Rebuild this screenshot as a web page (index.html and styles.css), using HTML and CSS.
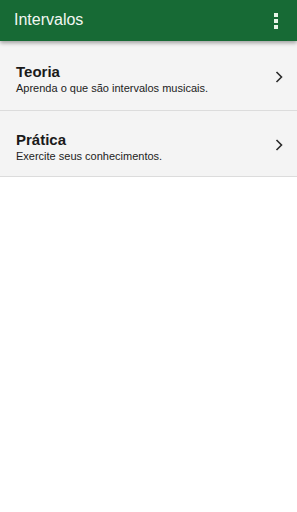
FILE: index.html
```html
<!DOCTYPE html>
<html lang="pt">
<head>
    <meta charset="UTF-8">
    <meta name="viewport" content="width=device-width, initial-scale=1.0">
    <title>Intervalos</title>
    <link rel="stylesheet" href="styles.css">
</head>
<body>
    <header class="toolbar">
        <span class="toolbar-title">Intervalos</span>
        <span class="menu-dots"><i></i><i></i><i></i></span>
    </header>

    <div class="menu-list">
        <div class="menu-item">
            <div class="item-text">
                <div class="item-title">Teoria</div>
                <div class="item-sub">Aprenda o que são intervalos musicais.</div>
            </div>
            <svg class="chevron" width="8" height="12" viewBox="0 0 8 12">
                <path d="M1.5 1 L6.5 6 L1.5 11" fill="none" stroke="#2a2a2a" stroke-width="1.6"/>
            </svg>
        </div>
        <div class="menu-item">
            <div class="item-text">
                <div class="item-title">Prática</div>
                <div class="item-sub">Exercite seus conhecimentos.</div>
            </div>
            <svg class="chevron" width="8" height="12" viewBox="0 0 8 12">
                <path d="M1.5 1 L6.5 6 L1.5 11" fill="none" stroke="#2a2a2a" stroke-width="1.6"/>
            </svg>
        </div>
    </div>
</body>
</html>
```

FILE: styles.css
```css
body {
    margin: 0;
    padding: 0;
    background: #fff;
    font-family: 'Liberation Sans', Arial, sans-serif;
    color: #1a1a1a;
}

.toolbar {
    position: relative;
    z-index: 2;
    height: 41px;
    background: #176a35;
    display: flex;
    align-items: center;
    justify-content: space-between;
    padding: 0 19px 0 14px;
    box-shadow: 0 2px 4px rgba(0, 0, 0, 0.35);
}

.toolbar-title {
    color: #f2f7f2;
    font-size: 16px;
    margin-top: -1px;
}

.menu-dots {
    display: flex;
    flex-direction: column;
    gap: 2px;
    margin-top: 1px;
}

.menu-dots i {
    display: block;
    width: 4px;
    height: 4px;
    background: #e8f5e8;
}

.menu-list {
    background: #f4f4f4;
}

.menu-item {
    display: flex;
    align-items: center;
    justify-content: space-between;
    padding: 0 14px 0 16px;
    height: 65px;
    border-bottom: 1px solid #dcdcdc;
}

.menu-item:first-child {
    height: 69px;
}

.item-text {
    padding-top: 7px;
}

.item-title {
    font-size: 15px;
    font-weight: bold;
    line-height: 18px;
}

.item-sub {
    font-size: 11px;
    line-height: 14px;
    color: #222;
}

.chevron {
    display: block;
    margin-top: 2px;
}
```
